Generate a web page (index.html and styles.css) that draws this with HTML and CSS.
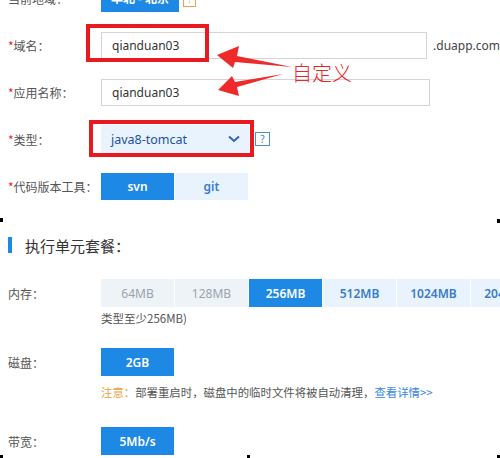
FILE: index.html
```html
<!DOCTYPE html>
<html lang="zh-CN">
<head>
<meta charset="utf-8">
<title>执行单元配置</title>
<link rel="stylesheet" href="styles.css">
</head>
<body>
<div class="page">
  <div class="row row-region">
    <div class="label">当前地域：</div>
    <div class="btn btn-primary btn-region">华北 - 北京</div>
    <div class="warn">!</div>
  </div>

  <div class="row row-domain">
    <div class="label"><span class="req">*</span>域名：</div>
    <div class="input">qianduan03</div>
    <div class="suffix">.duapp.com</div>
  </div>

  <div class="row row-app">
    <div class="label"><span class="req">*</span>应用名称：</div>
    <div class="input">qianduan03</div>
  </div>

  <div class="row row-type">
    <div class="label"><span class="req">*</span>类型：</div>
    <div class="select">
      <span>java8-tomcat</span>
      <svg class="chev" width="12" height="8" viewBox="0 0 12 8"><path d="M1 1.5 L6 6 L11 1.5" fill="none" stroke="#2a66b8" stroke-width="2"/></svg>
    </div>
    <div class="help">?</div>
  </div>

  <div class="row row-vcs">
    <div class="label"><span class="req">*</span>代码版本工具：</div>
    <div class="seg">
      <div class="btn btn-primary">svn</div>
      <div class="btn btn-light">git</div>
    </div>
  </div>

  <div class="section-title">执行单元套餐：</div>

  <div class="row row-mem">
    <div class="label">内存：</div>
    <div class="opts">
      <div class="btn btn-disabled">64MB</div>
      <div class="btn btn-disabled">128MB</div>
      <div class="btn btn-primary">256MB</div>
      <div class="btn btn-light">512MB</div>
      <div class="btn btn-light">1024MB</div>
      <div class="btn btn-light">2048MB</div>
    </div>
  </div>
  <div class="hint">类型至少256MB)</div>

  <div class="row row-disk">
    <div class="label">磁盘：</div>
    <div class="btn btn-primary">2GB</div>
  </div>
  <div class="note"><span class="warn-text">注意：</span>部署重启时，磁盘中的临时文件将被自动清理，<span class="link">查看详情&gt;&gt;</span></div>

  <div class="row row-bw">
    <div class="label">带宽：</div>
    <div class="btn btn-primary">5Mb/s</div>
  </div>

  <div class="mark mark-domain"></div>
  <div class="mark mark-type"></div>
  <svg class="arrows" width="500" height="458" viewBox="0 0 500 458">
    <polygon points="217,55 239,46 237,56 292,67 235,62 233,68" fill="#ee2a2a"/>
    <polygon points="218,90 232,76 235,82 283,74 237,87 239,96" fill="#ee2a2a"/>
  </svg>
  <div class="anno-text">自定义</div>

  <div class="handle h1"></div>
  <div class="handle h2"></div>
  <div class="handle h3"></div>
  <div class="handle h4"></div>
  <div class="handle h5"></div>
</div>
</body>
</html>
```

FILE: styles.css
```css
html, body {
  margin: 0;
  padding: 0;
  background: #fff;
}
.page {
  position: relative;
  width: 500px;
  height: 458px;
  overflow: hidden;
  padding-left: 8px;
  box-sizing: border-box;
  font-family: "Noto Sans", "Noto Sans CJK SC", sans-serif;
  font-size: 12px;
  color: #555;
}
.row {
  display: flex;
  align-items: center;
}
.label {
  width: 93px;
  flex: none;
  font-family: "Noto Sans CJK TC", "Noto Sans CJK SC", sans-serif;
  font-size: 12px;
  color: #555;
}
.req { color: #e8252a; }

.btn {
  width: 73px;
  height: 28px;
  display: flex;
  align-items: center;
  justify-content: center;
  box-sizing: border-box;
  font-family: "Noto Sans", "Noto Sans CJK SC", sans-serif;
  font-size: 12px;
  font-weight: 600;
  flex: none;
}
.btn-primary { background: #1e88e5; color: #fff; }
.btn-light { background: #e8f3fd; color: #3a7cc8; }
.btn-disabled { background: #eef3f8; color: #9aa3ad; font-weight: 400; }

.row-region { margin-top: -16px; height: 28px; }
.btn-region { width: 78px; }
.warn {
  margin-left: 4px;
  align-self: flex-end;
  margin-bottom: 5px;
  width: 11px;
  height: 14px;
  border: 1px solid #f0a050;
  color: #f0a050;
  font-size: 10px;
  line-height: 14px;
  text-align: center;
}

.input {
  width: 329px;
  height: 27px;
  box-sizing: border-box;
  border: 1px solid #d4d4d4;
  padding-left: 10px;
  display: flex;
  align-items: center;
  color: #333;
  font-size: 12px;
}
.suffix { margin-left: 6px; color: #444; }
.row-domain { margin-top: 20px; }
.row-app { margin-top: 20px; }

.row-type { margin-top: 19px; }
.select {
  width: 148px;
  height: 28px;
  box-sizing: border-box;
  background: #e8f3fd;
  display: flex;
  align-items: center;
  justify-content: space-between;
  padding: 0 9px 0 10px;
  color: #22529c;
  font-size: 12.5px;
}
.help {
  margin-left: 6px;
  width: 13px;
  height: 12px;
  border: 1px solid #4a8fd8;
  color: #3a7fd0;
  font-size: 10px;
  line-height: 12px;
  text-align: center;
}

.row-vcs { margin-top: 20px; }
.seg { display: flex; gap: 1px; }
.seg .btn { height: 27px; }

.section-title {
  margin-top: 37px;
  height: 16px;
  display: flex;
  align-items: center;
  border-left: 4px solid #1e88e5;
  padding-left: 13px;
  font-family: "Noto Sans CJK TC", "Noto Sans CJK SC", sans-serif;
  font-size: 15px;
  color: #333;
}

.row-mem { margin-top: 26px; }
.opts { display: flex; gap: 1px; }
.hint {
  margin-top: 4px;
  margin-left: 93px;
  line-height: 14px;
  font-family: "Noto Sans CJK SC", sans-serif;
  font-size: 11.5px;
  color: #555;
}
.row-disk { margin-top: 23px; }
.note {
  margin-top: 9px;
  margin-left: 93px;
  line-height: 14px;
  font-family: "Noto Sans CJK SC", sans-serif;
  font-size: 11.4px;
  color: #555;
  white-space: nowrap;
}
.warn-text { color: #f0a040; }
.link { color: #3a85e0; }
.row-bw { margin-top: 28px; }

.mark {
  position: absolute;
  border: 4px solid #e8191f;
  box-sizing: border-box;
}
.mark-domain { left: 86px; top: 24px; width: 123px; height: 38px; }
.mark-type { left: 89px; top: 120px; width: 165px; height: 37px; }
.arrows { position: absolute; left: 0; top: 0; }
.anno-text {
  position: absolute;
  left: 292px;
  top: 60px;
  font-family: "Noto Sans CJK SC", sans-serif;
  font-size: 20px;
  line-height: 26px;
  color: #e8252a;
  font-weight: 300;
}
.handle {
  position: absolute;
  width: 3px;
  height: 4px;
  background: #000;
}
.h1 { left: 0; top: 218px; }
.h2 { left: 497px; top: 219px; }
.h3 { left: 0; top: 455px; }
.h4 { left: 247px; top: 455px; }
.h5 { left: 497px; top: 455px; }
```
